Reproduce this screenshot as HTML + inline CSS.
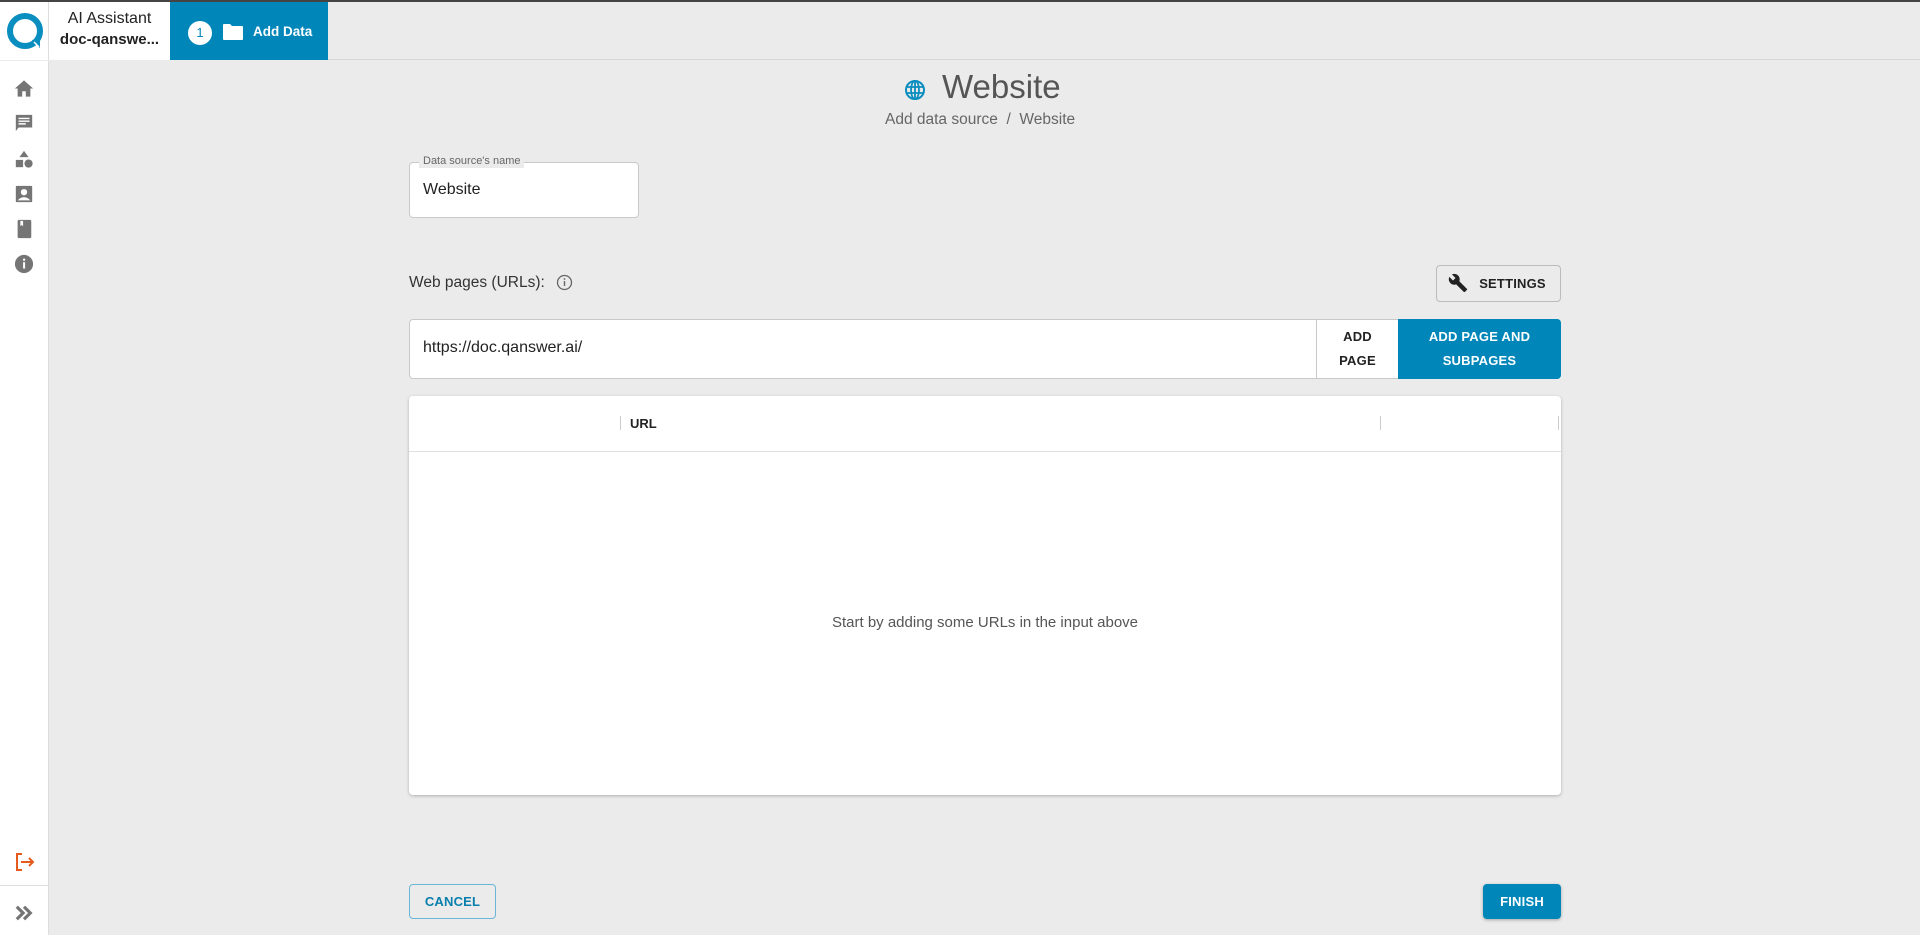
<!DOCTYPE html>
<html><head><meta charset="utf-8"><style>
*{box-sizing:border-box;margin:0;padding:0}
body{width:1920px;height:935px;overflow:hidden;background:#ebebeb;font-family:"Liberation Sans",Roboto,sans-serif;position:relative;color:#333}
.abs{position:absolute}
#topline{left:0;top:0;width:1920px;height:2px;background:#444}
#header{left:0;top:2px;width:1920px;height:58px;background:#ebebeb;border-bottom:1px solid #d6d6d6}
#logo{left:0;top:2px;width:49px;height:58px;background:#fff;border-right:1px solid #ddd}
#title{left:49px;top:2px;width:121px;height:58px;background:#fff;text-align:center}
#tab{left:170px;top:2px;width:158px;height:58px;background:#0086b8;color:#fff}
#side{left:0;top:61px;width:49px;height:874px;background:#fff;border-right:1px solid #ddd}
.ic{position:absolute;left:14px}
.card{background:#fff;border:1px solid #c9c9c9;border-radius:4px}
.btn{font-weight:bold;font-size:13px;letter-spacing:.2px;text-align:center}
</style></head><body>
<div class="abs" id="header"></div>
<div class="abs" id="topline"></div>
<div class="abs" id="logo">
<svg width="38" height="38" viewBox="0 0 38 38" style="position:absolute;left:6px;top:10px"><circle cx="19" cy="19" r="15" fill="none" stroke="#0a8dbf" stroke-width="6"/><path d="M26 28 L34 36 L34 27 Z" fill="#0a8dbf"/><path d="M28 30 L33 35" stroke="#fff" stroke-width="1.5"/></svg>
</div>
<div class="abs" id="title"><div style="font-size:16px;margin-top:8px;color:#222">AI Assistant</div><div style="font-size:15px;font-weight:bold;margin-top:3px;color:#222">doc-qanswe...</div></div>
<div class="abs" id="tab">
<div class="abs" style="left:18px;top:19px;width:24px;height:24px;border-radius:50%;background:#fff;color:#0086b8;font-size:13px;text-align:center;line-height:24px">1</div>
<svg class="abs" style="left:52px;top:21px" width="22" height="18" viewBox="0 0 22 18"><path d="M1 2 Q1 1 2 1 H8 L10 3 H20 Q21 3 21 4 V16 Q21 17 20 17 H2 Q1 17 1 16 Z" fill="#fff"/></svg>
<div class="abs" style="left:83px;top:22px;font-size:13.5px;font-weight:bold">Add Data</div>
</div>
<div class="abs" id="side">
<svg class="ic" style="top:18px" width="20" height="19" viewBox="0 0 22 20"><path d="M11 1 L21 10 H18 V19 H13 V13 H9 V19 H4 V10 H1 Z" fill="#757575"/></svg>
<svg class="ic" style="top:52px" width="20" height="20" viewBox="0 0 22 22"><path d="M2 2 H20 V16 H5 L2 20 Z" fill="#757575"/><path d="M5 6 H17 M5 9 H17 M5 12 H13" stroke="#fff" stroke-width="1.6"/></svg>
<svg class="ic" style="top:88px" width="20" height="20" viewBox="0 0 22 22"><path d="M11 2 L16 9 H6 Z" fill="#757575"/><rect x="2" y="12" width="8" height="8" fill="#757575"/><circle cx="16" cy="16" r="4.5" fill="#757575"/></svg>
<svg class="ic" style="top:123px" width="20" height="20" viewBox="0 0 22 22"><rect x="2" y="2" width="18" height="18" rx="1" fill="#757575"/><circle cx="11" cy="9" r="3.5" fill="#fff"/><path d="M4 18 Q11 11 18 18 Z" fill="#fff"/></svg>
<svg class="ic" style="top:158px" width="20" height="20" viewBox="0 0 22 22"><rect x="4" y="1" width="15" height="20" rx="1.5" fill="#757575"/><path d="M7 2 V8 L8.5 6.5 L10 8 V2 Z" fill="#fff"/></svg>
<svg class="ic" style="top:193px" width="20" height="20" viewBox="0 0 22 22"><circle cx="11" cy="11" r="10" fill="#757575"/><rect x="10" y="9" width="2.2" height="7" fill="#fff"/><circle cx="11.1" cy="6.3" r="1.3" fill="#fff"/></svg>
<svg class="ic" style="top:790px" width="22" height="22" viewBox="0 0 22 22"><path d="M8 3 H3 V19 H8" fill="none" stroke="#e65a1d" stroke-width="2"/><path d="M7 11 H19 M15 7 L19 11 L15 15" fill="none" stroke="#e65a1d" stroke-width="2"/></svg>
<div class="abs" style="left:0;top:824px;width:49px;height:1px;background:#ddd"></div>
<svg class="ic" style="top:843px" width="20" height="18" viewBox="0 0 22 20"><path d="M3 3 L10 10 L3 17 M11 3 L18 10 L11 17" fill="none" stroke="#757575" stroke-width="3.5"/></svg>
</div>
<svg class="abs" style="left:904px;top:79px" width="22" height="22" viewBox="0 0 22 22"><circle cx="11" cy="11" r="9" fill="none" stroke="#0a8dbf" stroke-width="2"/><ellipse cx="11" cy="11" rx="4" ry="9" fill="none" stroke="#0a8dbf" stroke-width="1.8"/><path d="M2 8 H20 M2 14 H20 M11 2 V20" stroke="#0a8dbf" stroke-width="1.8"/></svg>
<div class="abs" style="left:942px;top:68px;font-size:33px;color:#555">Website</div>
<div class="abs" style="left:885px;top:111px;font-size:15.5px;color:#666">Add data source &nbsp;/&nbsp; Website</div>
<div class="abs card" style="left:409px;top:162px;width:230px;height:56px"></div>
<div class="abs" style="left:419px;top:154px;padding:0 4px;background:#ebebeb;font-size:11px;color:#666;line-height:14px">Data source's name</div>
<div class="abs" style="left:423px;top:181px;font-size:16px;color:#222">Website</div>
<div class="abs" style="left:409px;top:274px;font-size:15.5px;color:#333">Web pages (URLs):</div>
<svg class="abs" style="left:556px;top:274px" width="17" height="17" viewBox="0 0 17 17"><circle cx="8.5" cy="8.5" r="7" fill="none" stroke="#666" stroke-width="1.3"/><rect x="7.8" y="7" width="1.4" height="5" fill="#666"/><circle cx="8.5" cy="5" r=".9" fill="#666"/></svg>
<div class="abs btn" style="left:1436px;top:265px;width:125px;height:37px;border:1px solid #bbb;border-radius:4px;color:#222;line-height:35px;padding-left:28px">SETTINGS</div>
<svg class="abs" style="left:1448px;top:273px" width="20" height="20" viewBox="0 0 24 24"><path d="M22.7 19l-9.1-9.1c.9-2.3.4-5-1.5-6.9-2-2-5-2.4-7.4-1.3L9 6 6 9 1.6 4.7C.4 7.1.9 10.1 2.9 12.1c1.9 1.9 4.6 2.4 6.9 1.5l9.1 9.1c.4.4 1 .4 1.4 0l2.3-2.3c.5-.4.5-1.1.1-1.4z" fill="#222"/></svg>
<div class="abs card" style="left:409px;top:319px;width:1152px;height:60px"></div>
<div class="abs" style="left:423px;top:339px;font-size:16px;color:#222">https://doc.qanswer.ai/</div>
<div class="abs" style="left:1316px;top:320px;width:1px;height:58px;background:#c9c9c9"></div>
<div class="abs btn" style="left:1317px;top:320px;width:81px;height:58px;color:#222;line-height:24px;padding-top:5px">ADD<br>PAGE</div>
<div class="abs btn" style="left:1398px;top:319px;width:163px;height:60px;background:#0086b8;color:#fff;border-radius:0 4px 4px 0;line-height:24px;padding-top:6px">ADD PAGE AND<br>SUBPAGES</div>
<div class="abs" style="left:409px;top:396px;width:1152px;height:399px;background:#fff;border-radius:4px;box-shadow:0 1px 3px rgba(0,0,0,.25)"></div>
<div class="abs" style="left:409px;top:451px;width:1152px;height:1px;background:#e0e0e0"></div>
<div class="abs" style="left:620px;top:416px;width:1px;height:14px;background:#ccc"></div>
<div class="abs" style="left:1380px;top:416px;width:1px;height:14px;background:#ccc"></div>
<div class="abs" style="left:1558px;top:416px;width:1px;height:14px;background:#ccc"></div>
<div class="abs" style="left:630px;top:416px;font-size:13px;font-weight:bold;color:#222">URL</div>
<div class="abs" style="left:409px;top:614px;width:1152px;text-align:center;font-size:15px;color:#555">Start by adding some URLs in the input above</div>
<div class="abs btn" style="left:409px;top:884px;width:87px;height:35px;border:1px solid #6bb6d6;border-radius:4px;color:#0a7fad;line-height:33px">CANCEL</div>
<div class="abs btn" style="left:1483px;top:884px;width:78px;height:35px;background:#0086b8;border-radius:4px;color:#fff;line-height:35px;box-shadow:0 1px 3px rgba(0,0,0,.3)">FINISH</div>
</body></html>
